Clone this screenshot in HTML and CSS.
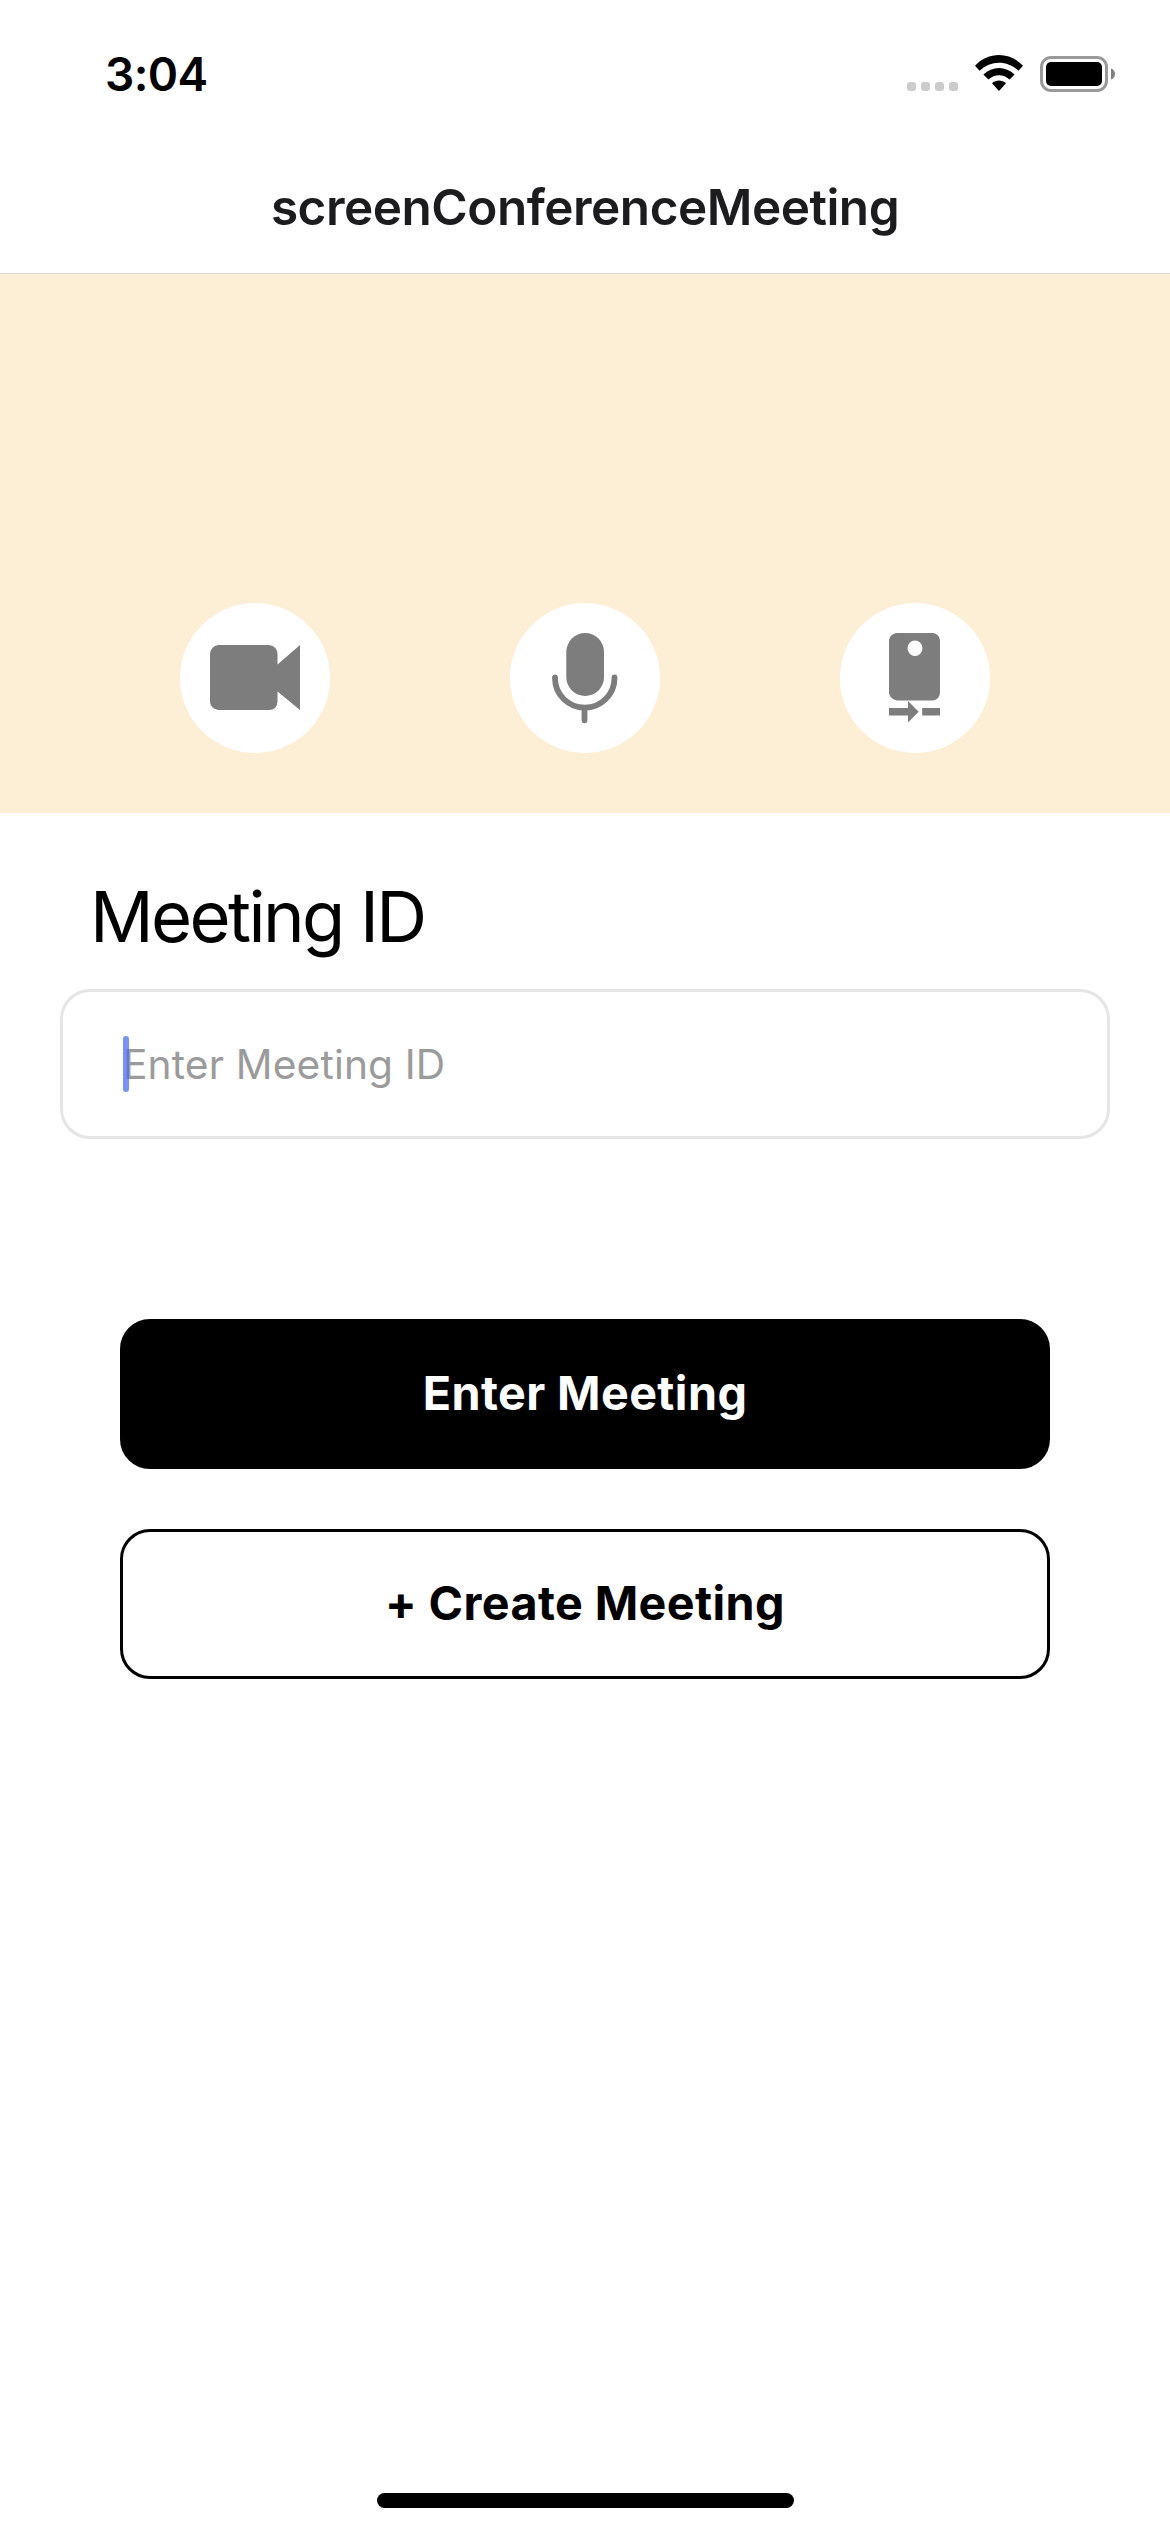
FILE: index.html
```html
<!DOCTYPE html>
<html lang="en">
<head>
<meta charset="utf-8">
<title>screenConferenceMeeting</title>
<link rel="stylesheet" href="styles.css">
</head>
<body>
<div class="screen">
  <header class="status-bar">
    <span class="clock">3:04</span>
    <div class="indicators">
      <div class="signal"><i></i><i></i><i></i><i></i></div>
      <svg class="wifi" viewBox="0 0 48 36">
        <path d="M0 10.8C13-3.5 35-3.5 48 10.8L43.4 15.7C32.5 5 15.5 5 4.6 15.7Z"/>
        <path d="M8.4 19.4C17.2 10.7 30.8 10.7 39.6 19.4L34.6 24.5C28.5 18.8 19.5 18.8 13.4 24.5Z"/>
        <path d="M17 28.2C21 24.6 27 24.6 31 28.2L24 36Z"/>
      </svg>
      <svg class="battery" viewBox="0 0 75 36">
        <rect x="1.5" y="1.5" width="65" height="33" rx="9.5" fill="none" stroke="#999" stroke-width="3"/>
        <rect x="6" y="6" width="56" height="24" rx="5"/>
        <path d="M71 12.5C76.3 14 76.3 22 71 23.5Z" fill="#808080"/>
      </svg>
    </div>
  </header>
  <h1 class="title"><span>screenConferenceMeeting</span></h1>
  <section class="preview">
    <button class="control" aria-label="Camera">
      <svg viewBox="0 0 150 150"><path d="M38 42H89Q97.5 43 97.5 51.500V61.500L120 42V107L97.500 88.500V98.500Q97 107 89 107H38Q30 105 30 98.500V51.500Q30 44 38 42Z"/></svg>
    </button>
    <button class="control" aria-label="Microphone">
      <svg viewBox="0 0 150 150">
        <rect x="56.300" y="30" width="37.700" height="63" rx="18.850"/>
        <path class="stroke" d="M45 74.500V75A29.600 29.600 0 0 0 104.500 75V74.500M74.500 105V117.300"/>
      </svg>
    </button>
    <button class="control" aria-label="Switch camera">
      <svg viewBox="0 0 150 150">
        <path fill-rule="evenodd" d="M57 30H93Q99 31 100 37V90Q99 97 93 97.500H57Q50 96 49 90V37Q50 31 57 30ZM75 37.500A7.500 7.700 0 1 0 75 52.900A7.500 7.700 0 1 0 75 37.500Z"/>
        <path d="M49 105H68V98L78.700 108.800L68 119.600V112.500H49ZM82.200 105H100V112.500H82.200Z"/>
      </svg>
    </button>
  </section>
  <main class="form">
    <label class="field-label" for="meeting-id"><span>Meeting ID</span></label>
    <div class="field">
      <input class="field-input" id="meeting-id" placeholder="Enter Meeting ID">
      <i class="caret"></i>
    </div>
    <div class="actions">
      <button class="button primary">Enter Meeting</button>
      <button class="button secondary">+ Create Meeting</button>
    </div>
  </main>
  <div class="home-indicator"></div>
</div>
</body>
</html>
```

FILE: styles.css
```css
* { box-sizing: border-box; }
body { margin: 0; background: #fff; }
button { padding: 0; border: 0; font: inherit; }

.screen {
  width: 1170px;
  height: 2532px;
  display: flex;
  flex-direction: column;
  background: #fff;
  color: #000;
  font-family: Inter, "Liberation Sans", sans-serif;
}

.status-bar {
  height: 141px;
  padding: 55px 55px 0 105px;
  display: flex;
  justify-content: space-between;
  align-items: flex-start;
}
.clock { font-size: 46px; line-height: 39px; font-weight: 600; letter-spacing: -.6px; white-space: nowrap; }
.indicators { display: flex; }
.signal { display: flex; gap: 5px; padding-top: 27px; margin-right: 17px; }
.signal i { width: 9px; height: 9px; border-radius: 3px; background: #ccc; }
.wifi { width: 48px; height: 36px; margin-right: 17px; }
.battery { width: 75px; height: 36px; margin-top: 1px; }

.title {
  margin: 0;
  height: 133px;
  border-bottom: 1px solid #dcdad5;
  text-align: center;
  font-size: 49.500px;
  line-height: 132px;
  font-weight: 600;
  letter-spacing: -.5px;
  color: #1c1c1e;
}

.preview {
  height: 539px;
  padding: 0 180px 60px;
  display: flex;
  justify-content: space-between;
  align-items: flex-end;
  background: #fcefd6;
}
.control { width: 150px; height: 150px; border-radius: 50%; background: #fff; }
.control svg { display: block; width: 150px; height: 150px; fill: #7d7d7d; }
.control .stroke { fill: none; stroke: #7d7d7d; stroke-width: 5.800px; stroke-linecap: round; }

.form { flex: 1; padding: 64px 60px 0; }
.field-label {
  display: block;
  height: 112px;
  padding-left: 30px;
  font-size: 70.500px;
  line-height: 80px;
  letter-spacing: -2.600px;
}
.field { position: relative; height: 150px; }
.field-input {
  width: 100%;
  height: 150px;
  padding: 0 60px;
  border: 3px solid #e5e5e5;
  border-radius: 30px;
  background: #fff;
  font: 400 40.700px Inter, "Liberation Sans", sans-serif;
  letter-spacing: .15px;
  outline: 0;
}
.field-input::placeholder { color: #9b9b9b; opacity: 1; }
.caret {
  position: absolute;
  left: 63px;
  top: 47px;
  width: 6px;
  height: 56px;
  border-radius: 3px;
  background: #4a6cf7;
  opacity: .75;
}
.actions { display: flex; flex-direction: column; gap: 60px; padding: 180px 60px 0; }
.button {
  height: 150px;
  padding-bottom: 2px;
  border: 3px solid #000;
  border-radius: 30px;
  font-size: 46.700px;
  font-weight: 700;
  line-height: 142px;
  letter-spacing: .4px;
}
.primary { background: #000; color: #fff; }
.secondary { background: #fff; color: #000; }

.home-indicator {
  width: 417px;
  height: 15px;
  margin: 0 0 24px 377px;
  border-radius: 8px;
  background: #000;
}
```
